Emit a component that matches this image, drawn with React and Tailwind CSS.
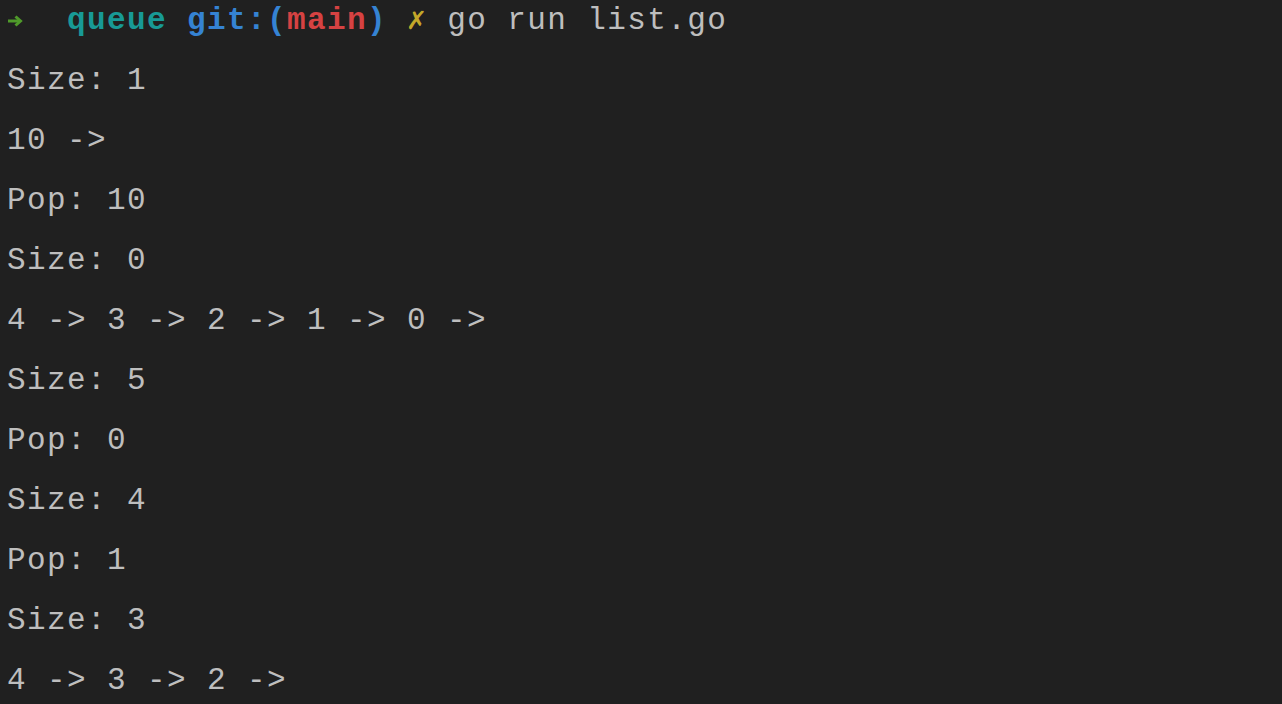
export default function App() {
  const lines = [
    "Size: 1",
    "10 ->",
    "Pop: 10",
    "Size: 0",
    "4 -> 3 -> 2 -> 1 -> 0 ->",
    "Size: 5",
    "Pop: 0",
    "Size: 4",
    "Pop: 1",
    "Size: 3",
    "4 -> 3 -> 2 ->",
  ];
  return (
    <div
      className="w-[1282px] h-[704px] overflow-hidden bg-[#202020] text-[#bebebe] pl-[7px] whitespace-pre"
      style={{ fontFamily: '"Liberation Mono", "DejaVu Sans Mono", monospace' }}
    >
      <div className="mt-[-9px] text-[31px] tracking-[1.4px] leading-[60px]">
        <div className="flex items-center">
          <span className="inline-flex w-[20px] h-[60px] items-center">
            <svg width="16" height="12" viewBox="0 0 16 12" className="mt-[-1px]">
              <path d="M1 6 H13" stroke="#4f9a2a" strokeWidth="3" fill="none" />
              <path d="M8.5 1.5 L13.5 6 L8.5 10.5" stroke="#4f9a2a" strokeWidth="3" fill="none" strokeLinejoin="miter" />
            </svg>
          </span>
          <span>{"  "}</span>
          <span className="font-bold text-[#189a96]">queue</span>
          <span> </span>
          <span className="font-bold text-[#3583d3]">git:(</span>
          <span className="font-bold text-[#d64242]">main</span>
          <span className="font-bold text-[#3583d3]">)</span>
          <span> </span>
          <span className="font-bold text-[#c4a82a]">✗</span>
          <span> go run list.go</span>
        </div>
        {lines.map((l, i) => (
          <div key={i}>{l}</div>
        ))}
      </div>
    </div>
  );
}
